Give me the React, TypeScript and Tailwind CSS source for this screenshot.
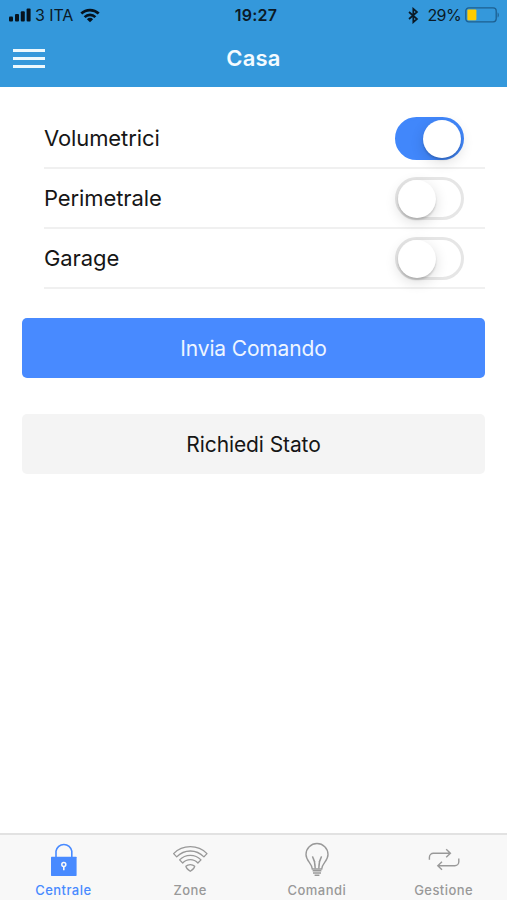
import { useState } from 'react';

const tabs = [
  { id: 'centrale', label: 'Centrale', icon: LockIcon },
  { id: 'zone', label: 'Zone', icon: WifiOutlineIcon },
  { id: 'comandi', label: 'Comandi', icon: BulbIcon },
  { id: 'gestione', label: 'Gestione', icon: RepeatIcon },
];

function LockIcon() {
  return (
    <svg width="40" height="36" viewBox="0 0 40 36" fill="none">
      <path d="M13 16V10.2a8 8 0 0 1 15.8 0V16" stroke="currentColor" strokeWidth="1.6" />
      <rect x="8" y="15.7" width="25.6" height="19.2" rx="0.6" fill="currentColor" />
      <circle cx="20.8" cy="23.6" r="2" stroke="#f8f8f8" strokeWidth="1.5" />
      <path d="M20.8 25.4v3.8" stroke="#f8f8f8" strokeWidth="1.6" />
    </svg>
  );
}

function WifiOutlineIcon() {
  return (
    <svg width="40" height="36" viewBox="0 0 40 36" fill="none" stroke="currentColor" strokeWidth="1.3" strokeLinejoin="round">
      <path d="M3.6 12.6C12.6 3.4 28 3.4 37 12.6L33.9 15.9C26.4 8 14.2 8 6.7 15.9Z" />
      <path d="M9.6 18.9C15.4 12.8 25.2 12.8 31 18.9L27.9 22C23.8 17.6 16.8 17.6 12.7 22Z" />
      <path d="M15.9 25.3C18.3 23 22.3 23 24.7 25.3C24.4 27.1 22.4 28.9 20.3 30.3C18.2 28.9 16.2 27.1 15.9 25.3Z" />
    </svg>
  );
}

function BulbIcon() {
  return (
    <svg width="40" height="36" viewBox="0 0 40 36" fill="none" stroke="currentColor" strokeWidth="1.4">
      <path d="M15.3 28C15 22.4 9 20 9 13.5a11 11 0 0 1 22 0C31 20 25 22.4 24.7 28Z" />
      <path d="M18.2 27.6C18.2 22.8 17.6 19.4 15.4 15.4M21.8 27.6C21.8 22.8 22.4 19.4 24.6 15.4" />
      <path d="M18.2 20.5L16.6 18.8M21.8 20.5L23.4 18.8" strokeWidth="0.8" />
      <path d="M15.6 29.8h8.8M16 32h8M17.6 34.2h4.8" />
    </svg>
  );
}

function RepeatIcon() {
  return (
    <svg width="40" height="36" viewBox="0 0 40 36" fill="none" stroke="currentColor" strokeWidth="1.4">
      <path d="M5.4 18.8V16.2a4 4 0 0 1 4-4H26M22.2 8.2l4.2 4-4.2 4" />
      <path d="M34.8 17.6v3.1a4 4 0 0 1-4 4H14.2M18 20.7l-4.2 4 4.2 4" />
    </svg>
  );
}

function StatusBar() {
  return (
    <div className="grid h-[30px] grid-cols-3 items-center text-[16px] leading-none text-[#0b1a26]">
      <div className="flex items-center pl-[9px]">
        <svg width="22" height="14" viewBox="0 0 22 14" fill="#06131e">
          <rect x="0" y="8.5" width="4" height="5" rx="1" />
          <rect x="6" y="6" width="4" height="7.5" rx="1" />
          <rect x="11.8" y="3.3" width="4" height="10.2" rx="1" />
          <rect x="17.6" y="0.5" width="4" height="13" rx="1" />
        </svg>
        <span className="ml-[4px] tracking-[-0.1px]">3 ITA</span>
        <svg className="ml-[7px]" width="20" height="15" viewBox="0 0 20 15" fill="none" stroke="#06131e" strokeWidth="2.7">
          <path d="M1.3 5.6a12.6 12.6 0 0 1 17.4 0M4.6 9.1a7.8 7.8 0 0 1 10.8 0" />
          <path d="M10 14.2L6.9 11.3a4.5 4.5 0 0 1 6.2 0Z" fill="#06131e" stroke="none" />
        </svg>
      </div>
      <span className="pl-[5px] text-center font-semibold tracking-[0.25px]">19:27</span>
      <div className="flex items-center justify-end pr-[7px]">
        <svg width="11" height="17" viewBox="0 0 11 17" fill="none" stroke="currentColor" strokeWidth="1.7">
          <path d="M1 5L9 12L5.3 15.2V1.8L9 5L1 12" />
        </svg>
        <span className="ml-[8px] tracking-[-0.6px]">29%</span>
        <svg className="ml-[4px]" width="35" height="16" viewBox="0 0 35 16" fill="none">
          <rect x="0.8" y="0.8" width="30.4" height="14" rx="3" stroke="#1d5f90" strokeWidth="1.3" />
          <rect x="2.4" y="2.6" width="9" height="10.6" rx="1" fill="#ffcc00" />
          <path d="M32.6 5.4c1.6.6 1.6 4.4 0 5Z" fill="#1d5f90" />
        </svg>
      </div>
    </div>
  );
}

function Toggle({ checked, onChange, label }: { checked: boolean; onChange: () => void; label: string }) {
  return (
    <button
      role="switch"
      aria-checked={checked}
      aria-label={label}
      onClick={onChange}
      className={`mt-px flex h-[43px] w-[69px] items-center rounded-full border-[3px] ${
        checked ? 'justify-end border-[#4187fb] bg-[#4187fb]' : 'justify-start border-[#e6e6e6] bg-white'
      }`}
    >
      <span className="size-[38px] shrink-0 rounded-full bg-white shadow-[0_4px_14px_rgba(0,0,0,0.14),0_2px_2px_rgba(0,0,0,0.16)]" />
    </button>
  );
}

export default function App() {
  const [areas, setAreas] = useState([
    { name: 'Volumetrici', active: true },
    { name: 'Perimetrale', active: false },
    { name: 'Garage', active: false },
  ]);
  const [activeTab, setActiveTab] = useState('centrale');

  const toggleArea = (name: string) =>
    setAreas(areas.map((a) => (a.name === name ? { ...a, active: !a.active } : a)));

  return (
    <div className="flex h-[900px] w-[507px] flex-col overflow-hidden bg-white font-['Inter','Liberation_Sans',sans-serif] text-black">
      <header className="h-[87px] shrink-0 bg-[#3498db]">
        <StatusBar />
        <div className="grid h-[56px] grid-cols-3 items-center">
          <button aria-label="Menu" className="ml-[13px] flex w-8 flex-col gap-[5px]">
            <span className="h-[3px] bg-[#ecf8fd]" />
            <span className="h-[3px] bg-[#ecf8fd]" />
            <span className="h-[3px] bg-[#ecf8fd]" />
          </button>
          <h1 className="text-center text-[22px] font-semibold tracking-[0.2px] text-[#f4fbff]">Casa</h1>
        </div>
      </header>

      <main className="flex-1 px-[22px] pt-[22px]">
        <ul className="pl-[22px]">
          {areas.map((area) => (
            <li key={area.name} className="flex h-[60px] items-center justify-between border-b-2 border-[#f0f0f0] pr-[21px]">
              <span className="mt-px text-[22px] tracking-[-0.1px] text-[#161616]">{area.name}</span>
              <Toggle checked={area.active} onChange={() => toggleArea(area.name)} label={area.name} />
            </li>
          ))}
        </ul>
        <button className="mt-[29px] h-[60px] w-full rounded-[5px] bg-[#488aff] pt-px text-[21px] tracking-[-0.15px] text-[#eef5ff]">
          Invia Comando
        </button>
        <button className="mt-9 h-[60px] w-full rounded-[5px] bg-[#f4f4f4] pt-px text-[21px] tracking-[-0.1px] text-[#161616]">
          Richiedi Stato
        </button>
      </main>

      <nav className="grid h-[67px] shrink-0 grid-cols-4 border-t-2 border-[#e2e2e2] bg-[#f8f8f8]">
        {tabs.map((tab) => (
          <button
            key={tab.id}
            onClick={() => setActiveTab(tab.id)}
            className={`flex flex-col items-center pt-[6px] ${activeTab === tab.id ? 'text-[#488aff]' : 'text-[#999999]'}`}
          >
            <tab.icon />
            <span className="mt-[5px] text-[13px] leading-4 font-medium tracking-[0.45px]">{tab.label}</span>
          </button>
        ))}
      </nav>
    </div>
  );
}
